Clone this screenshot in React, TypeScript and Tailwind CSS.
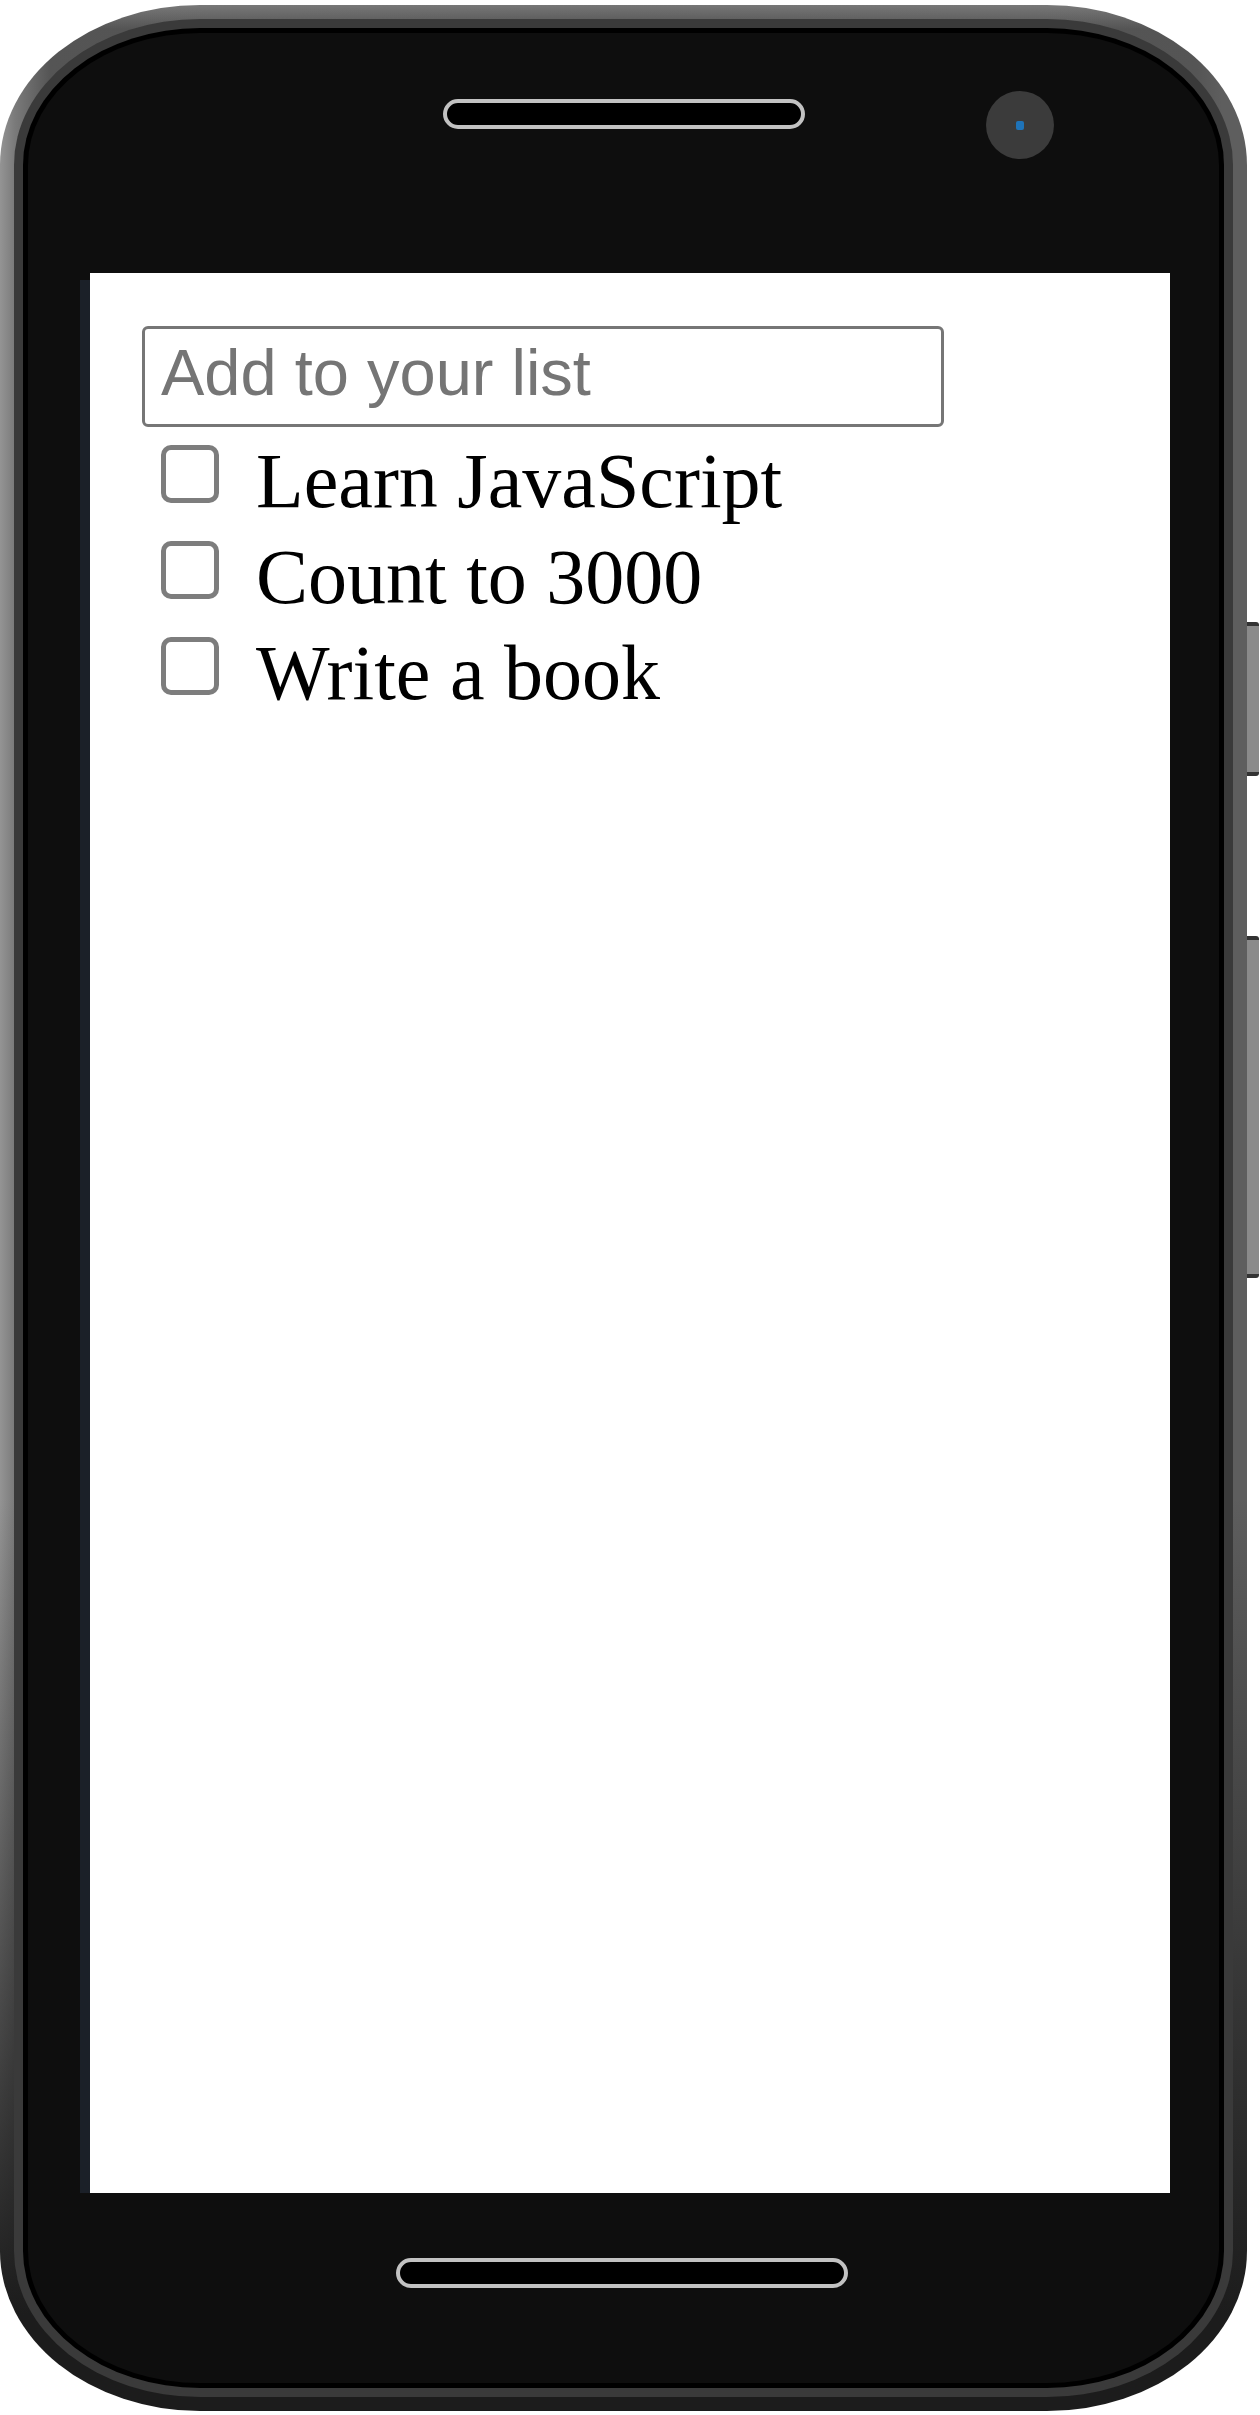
import React from "react";

const todos = ["Learn JavaScript", "Count to 3000", "Write a book"];

const TodoRow = ({ label }: { label: string }) => {
  return (
    <label className="flex items-start h-[96px] pl-[19px]">
      <input
        type="checkbox"
        className="appearance-none shrink-0 mt-[12px] w-[58px] h-[58px] border-[5px] border-[#7d7d7d] rounded-[10px] bg-white"
      />
      <span className="ml-[37px] text-[78px] leading-[96px] text-black whitespace-nowrap font-['Liberation_Serif',serif]">
        {label}
      </span>
    </label>
  );
};

const Speaker = ({ width }: { width: string }) => {
  return (
    <div className={`${width} h-[30px] rounded-full border-[4px] border-[#c2c2c2] bg-black`} />
  );
};

export default function App() {
  return (
    <div className="w-[1260px] h-[2415px] bg-white overflow-hidden flex items-start">
      {/* phone body */}
      <div className="mt-[5px] w-[1247px] h-[2406px] rounded-[200px/160px] p-[14px] bg-[linear-gradient(180deg,rgba(150,150,150,0.55)_0%,transparent_1%),linear-gradient(180deg,transparent_62%,#1c1c1c_96%),linear-gradient(90deg,#949494_0%,#7a7a7a_1.2%,#555_4%,#4e4e4e_50%,#555_96%,#5e5e5e_98%)]">
        <div className="w-full h-full rounded-[186px/146px] p-[9px] bg-[#3a3a3a]">
          <div className="w-full h-full rounded-[177px/137px] p-[5px] bg-black">
            <div className="w-full h-full rounded-[172px/132px] bg-[#0e0e0e] flex flex-col">
              {/* top: speaker + camera */}
              <div className="h-[240px] flex items-start pl-[415px]">
                <div className="mt-[66px]">
                  <Speaker width="w-[362px]" />
                </div>
                <div className="ml-[181px] mt-[58px] w-[68px] h-[68px] rounded-full bg-[#3b3b3b] flex items-center justify-center">
                  <div className="w-[8px] h-[9px] rounded-[2px] bg-[#1e73b8]" />
                </div>
              </div>

              {/* screen */}
              <div className="flex ml-[52px]">
                <div className="w-[10px] mt-[7px] h-[1913px] bg-[#1b2028]" />
                <div className="w-[1080px] h-[1920px] bg-white pt-[53px] pl-[52px]">
                  <input
                    type="text"
                    placeholder="Add to your list"
                    className="block w-[802px] h-[101px] border-[3px] border-[#767676] rounded-[6px] pl-[16px] pb-[8px] text-[65px] text-black placeholder:text-[#757575] outline-none font-['Liberation_Sans',sans-serif]"
                  />
                  <div className="mt-[6px] flex flex-col">
                    {todos.map((t) => (
                      <TodoRow key={t} label={t} />
                    ))}
                  </div>
                </div>
              </div>

              {/* bottom speaker */}
              <div className="pl-[368px] pt-[65px]">
                <Speaker width="w-[452px]" />
              </div>
            </div>
          </div>
        </div>
      </div>

      {/* side buttons */}
      <div className="flex flex-col w-[12px]">
        <div className="mt-[622px] h-[154px] rounded-r-[3px] bg-[#8a8a8a] border-y-[4px] border-[#333]" />
        <div className="mt-[160px] h-[342px] rounded-r-[3px] bg-[#8a8a8a] border-y-[4px] border-[#333]" />
      </div>
    </div>
  );
}
